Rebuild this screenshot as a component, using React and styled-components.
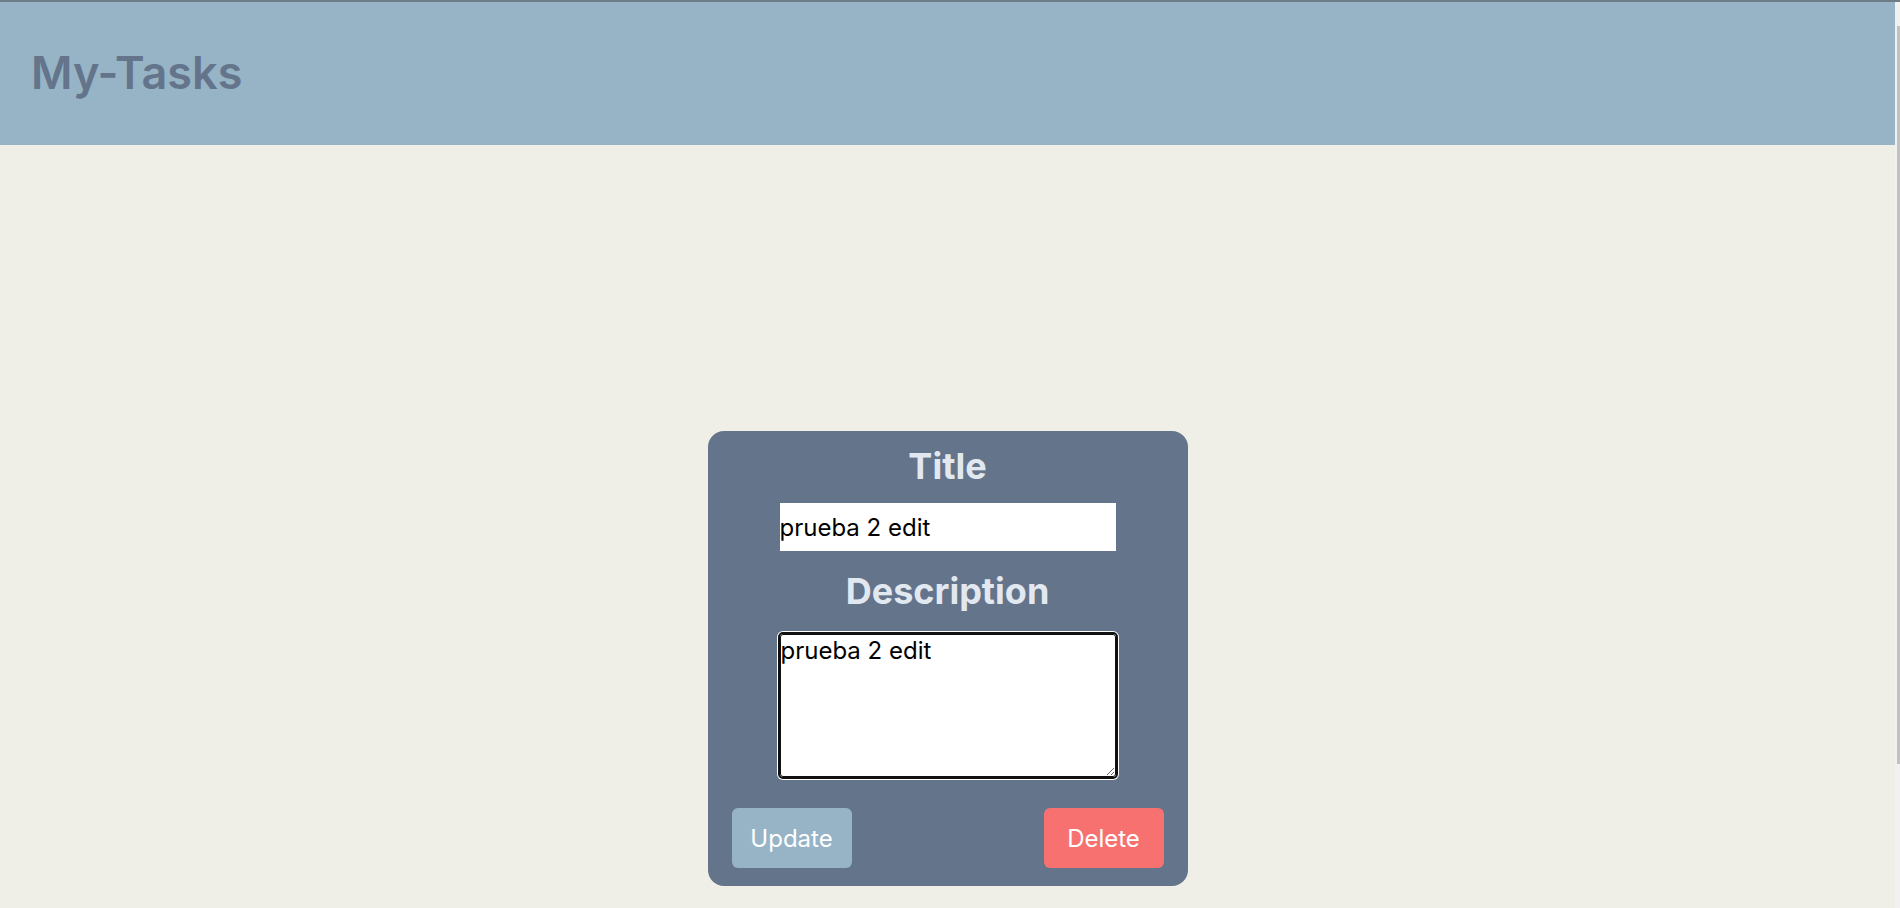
import React, { useState } from "react";
import styled, { createGlobalStyle } from "styled-components";

const GlobalStyle = createGlobalStyle`
  html {
    scrollbar-width: none;
  }
  html::-webkit-scrollbar {
    display: none;
  }
  body {
    margin: 0;
    background: #f0efe7;
    font-family: Inter, "Noto Sans", sans-serif;
  }
`;

const Page = styled.div`
  border-top: 2px solid #6c7d87;
  padding-right: 5px;
`;

const ScrollRail = styled.div`
  position: fixed;
  top: 2px;
  right: 0;
  bottom: 0;
  width: 5px;
  background: #f1f1f1;
`;

const ScrollThumb = styled.div`
  margin: 24px 0 0 2px;
  height: 738px;
  background: #c1c1c1;
`;

const Header = styled.header`
  box-sizing: border-box;
  height: 143px;
  background: #96b4c6;
  padding: 44px 31px 0;
`;

const Brand = styled.h1`
  margin: 0;
  font-size: 45px;
  line-height: 54px;
  font-weight: 600;
  color: #64748b;
`;

const Main = styled.main`
  display: flex;
  justify-content: center;
  padding: 286px 0 240px;
`;

const Card = styled.form`
  box-sizing: border-box;
  width: 480px;
  padding: 13px 24px 18px;
  border-radius: 16px;
  background: #64748b;
  display: flex;
  flex-direction: column;
  align-items: center;
`;

const Label = styled.h2`
  margin: ${(props) => props.$top || 0}px 0 0;
  font-size: 36px;
  line-height: 44px;
  font-weight: 700;
  color: #e2e8f0;
`;

const TitleInput = styled.input`
  box-sizing: border-box;
  margin-top: 15px;
  width: 336px;
  height: 48px;
  border: none;
  padding: 0;
  background: #fff;
  font-family: Inter, sans-serif;
  font-size: 24px;
  color: #000;
  outline: none;
`;

const DescInput = styled.textarea`
  box-sizing: border-box;
  margin-top: 21px;
  width: 336px;
  height: 143px;
  border: 1px solid #101010;
  border-radius: 3px;
  padding: 1px 0;
  background: #fff;
  font-family: Inter, sans-serif;
  font-size: 24px;
  color: #000;
  outline: 2px solid #101010;
  outline-offset: 0;
  box-shadow: 0 0 0 3px #fff;
`;

const Actions = styled.div`
  width: 100%;
  margin-top: 31px;
  display: flex;
  justify-content: space-between;
`;

const Button = styled.button`
  width: 120px;
  height: 60px;
  border: none;
  border-radius: 6px;
  background: ${(props) => (props.$danger ? "#f87171" : "#96b4c6")};
  color: #fff;
  font-family: Inter, sans-serif;
  font-size: 24px;
  cursor: pointer;
`;

export default function App() {
  const [title, setTitle] = useState("prueba 2 edit");
  const [description, setDescription] = useState("prueba 2 edit");

  return (
    <Page>
      <GlobalStyle />
      <Header>
        <Brand>My-Tasks</Brand>
      </Header>
      <Main>
        <Card onSubmit={(e) => e.preventDefault()}>
          <Label>Title</Label>
          <TitleInput
            type="text"
            value={title}
            onChange={(e) => setTitle(e.target.value)}
          />
          <Label $top={18}>Description</Label>
          <DescInput
            value={description}
            onChange={(e) => setDescription(e.target.value)}
          />
          <Actions>
            <Button type="button">Update</Button>
            <Button type="button" $danger>
              Delete
            </Button>
          </Actions>
        </Card>
      </Main>
      <ScrollRail>
        <ScrollThumb />
      </ScrollRail>
    </Page>
  );
}
